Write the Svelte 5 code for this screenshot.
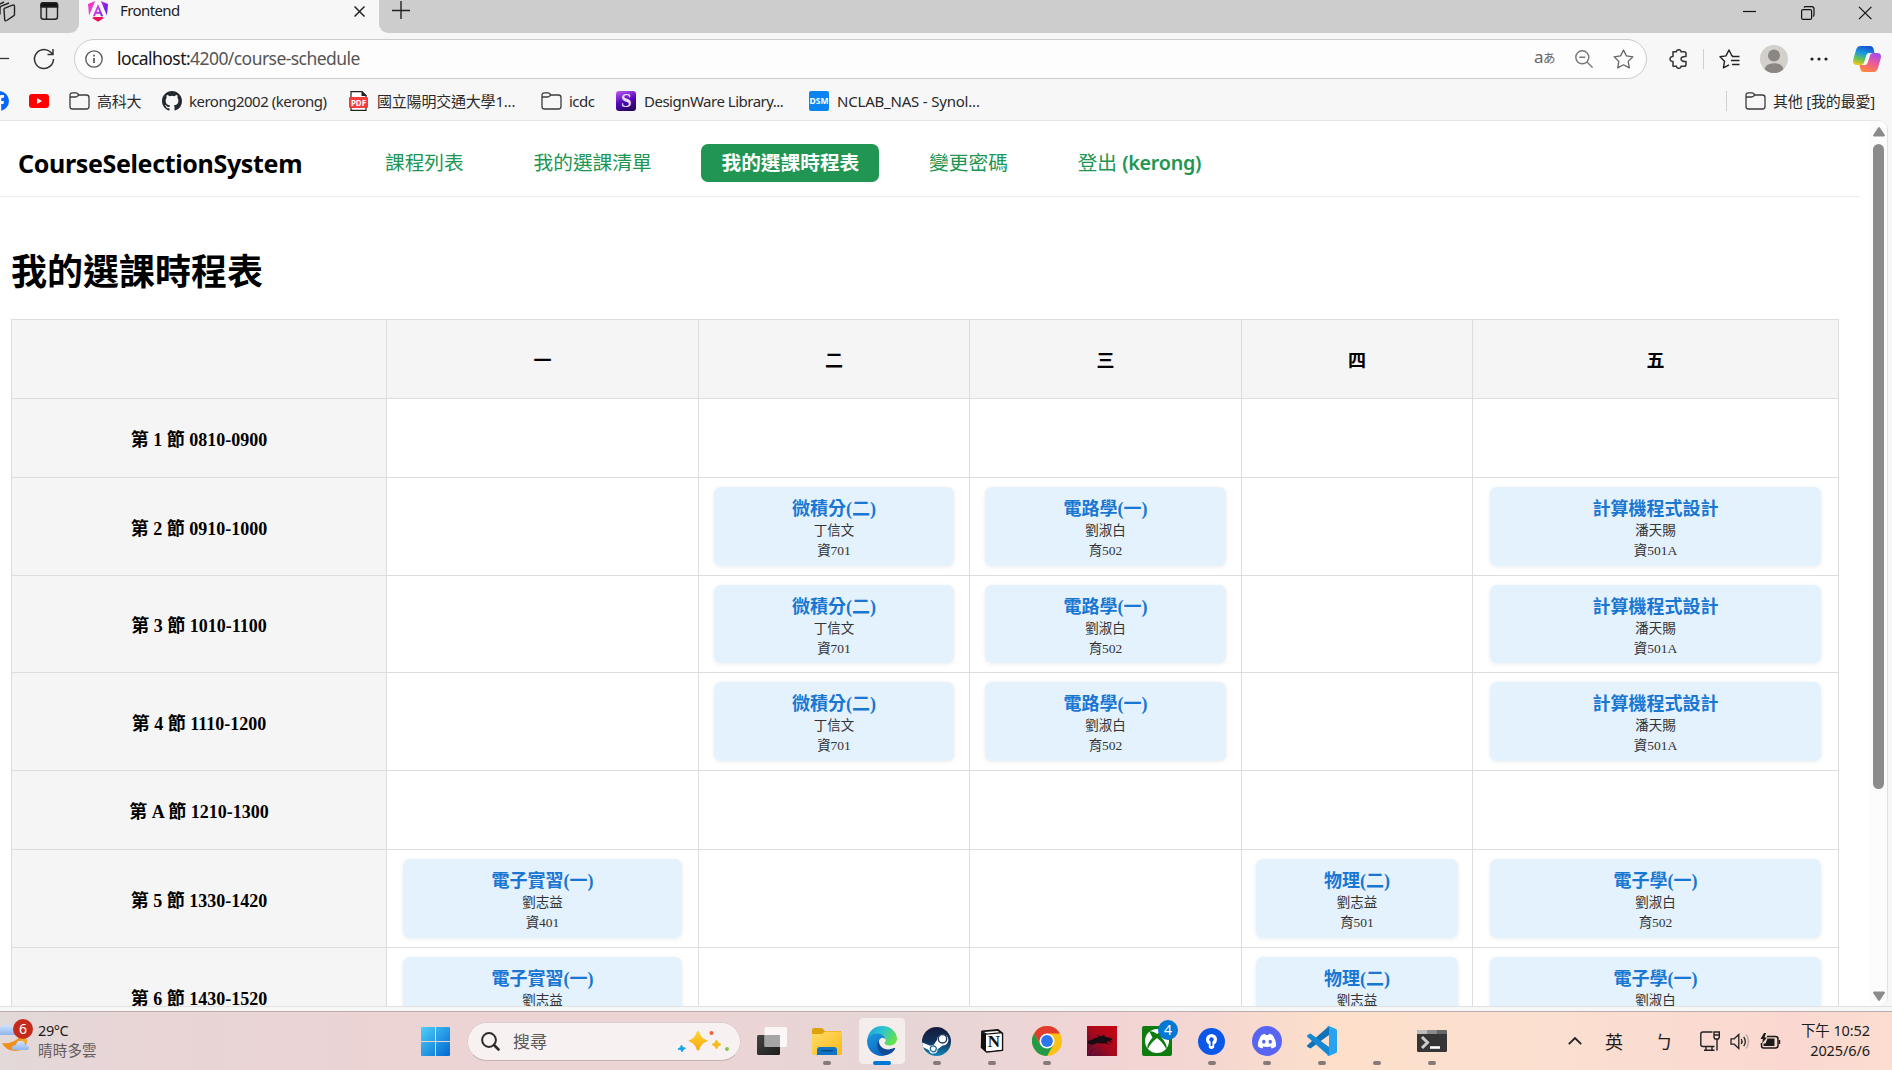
<script>
  const nav = [
    { label: '課程列表' },
    { label: '我的選課清單' },
    { label: '我的選課時程表', active: true },
    { label: '變更密碼' },
    { label: '登出', user: '(kerong)' }
  ];
  const days = ['一', '二', '三', '四', '五'];
  const calc = { name: '微積分(二)', teacher: '丁信文', room: '資701' };
  const circuit = { name: '電路學(一)', teacher: '劉淑白', room: '育502' };
  const prog = { name: '計算機程式設計', teacher: '潘天賜', room: '資501A' };
  const lab = { name: '電子實習(一)', teacher: '劉志益', room: '資401' };
  const physics = { name: '物理(二)', teacher: '劉志益', room: '育501' };
  const electronics = { name: '電子學(一)', teacher: '劉淑白', room: '育502' };
  const rows = [
    { label: '第 1 節 0810-0900', cells: [null, null, null, null, null] },
    { label: '第 2 節 0910-1000', cells: [null, calc, circuit, null, prog] },
    { label: '第 3 節 1010-1100', cells: [null, calc, circuit, null, prog] },
    { label: '第 4 節 1110-1200', cells: [null, calc, circuit, null, prog] },
    { label: '第 A 節 1210-1300', cells: [null, null, null, null, null] },
    { label: '第 5 節 1330-1420', cells: [lab, null, null, physics, electronics] },
    { label: '第 6 節 1430-1520', cells: [lab, null, null, physics, electronics] }
  ];
</script>

{#snippet folder()}
  <svg width="21" height="18" viewBox="0 0 21 18" fill="none" stroke="#3b3b3b" stroke-width="1.3">
    <path d="M1 4v10.5q0 2.5 2.5 2.5h14q2.500 0 2.500-2.500V5.500q0-2.500-2.500-2.500H10L8.200 1.200Q7.800.8 7 .8H3.500Q1 .8 1 3.300V5h5.800q.8 0 1.400-.6L9.800 3" />
  </svg>
{/snippet}

<div class="screen">
  <div class="tabs">
    <div class="tabs-left">
      <svg width="66" height="24" viewBox="0 0 66 24" fill="none" stroke="#222" stroke-width="1.4">
        <path d="M4 9.500q0-1 .9-1.400l7.600-3q2-.7 2 1.400v7.700q0 1.200-1 1.700l-6.800 4.600q-2 1.100-2-1zM0 14.500V8q0-1.300 1.200-1.800L9 3M-2 11V5l6-3" />
        <rect x="41" y="2.700" width="16.500" height="16.500" rx="2.500" />
        <path d="M41 7V5q0-2.300 2.300-2.300h12q2.300 0 2.300 2.300v2z" fill="#111" />
        <path d="M46.500 7v12" />
      </svg>
    </div>
    <div class="tab">
      <svg class="logo" width="20" height="21" viewBox="0 0 20 21">
        <defs>
          <linearGradient id="ng" x1="0" y1="0" x2="1" y2=".3">
            <stop offset="0" stop-color="#f637b5" /><stop offset=".45" stop-color="#e33be8" /><stop offset="1" stop-color="#6d1bf0" />
          </linearGradient>
        </defs>
        <path d="M7.200 0 0 3l1.100 11.500zM12.800 0 20 3l-1.100 11.500zM10 3.200l5.200 12H13l-1-2.400H8l-1 2.400H4.800zM10 7.500 8.600 11h2.800z" fill="url(#ng)" fill-rule="evenodd" />
        <path d="M5.400 16h9.200l1 1.300L10 20.700l-5.600-3.400z" fill="#f0115c" />
      </svg>
      <span class="tab-title">Frontend</span>
      <svg class="tab-x" width="11" height="11" viewBox="0 0 11 11" stroke="#222" stroke-width="1.500"><path d="M.5.5l10 10M10.500.5l-10 10" /></svg>
    </div>
    <div class="tabs-rest">
      <svg width="18" height="18" viewBox="0 0 18 18" stroke="#222" stroke-width="1.400"><path d="M9 0v18M0 9.500h18" /></svg>
      <div class="win">
        <svg width="130" height="14" viewBox="0 0 130 14" fill="none" stroke="#111" stroke-width="1.200">
          <path d="M0 5.500h13" />
          <rect x="58.600" y="3.600" width="10" height="9.800" rx="1.500" />
          <path d="M61 1.500q.4-.9 1.600-.9h6q2.400 0 2.400 2.400v5.500q0 1.400-1 2" />
          <path d="M116 .8l12.400 12.400M128.400.8 116 13.200" />
        </svg>
      </div>
    </div>
  </div>

  <div class="toolbar">
    <svg width="10" height="20" viewBox="0 0 10 20" stroke="#333" stroke-width="1.300"><path d="M0 9.500h9" /></svg>
    <svg width="22" height="22" viewBox="0 0 22 22" fill="none" stroke="#333" stroke-width="1.500"><path d="M20.500 11a9.500 9.500 0 1 1-3.300-7.200l2.300 2.200M20 1v5.500h-5.500" /></svg>
    <div class="address">
      <svg width="18" height="18" viewBox="0 0 18 18" fill="none" stroke="#555" stroke-width="1.300"><circle cx="9" cy="9" r="8.200" /><path d="M9 8v5M9 4.800v1.600" stroke-width="1.700" /></svg>
      <span class="url"><b>localhost:</b>4200/course-schedule</span>
      <span class="trans">a<small>あ</small></span>
      <svg width="18" height="18" viewBox="0 0 18 18" fill="none" stroke="#777" stroke-width="1.400"><circle cx="7.300" cy="7.300" r="6.500" /><path d="M12 12l5.600 5.600M4.300 7.300h6" /></svg>
      <svg width="21" height="20" viewBox="0 0 21 20" fill="none" stroke="#666" stroke-width="1.300" stroke-linejoin="round"><path d="M10.500 1l2.900 5.900 6.500.9-4.700 4.600 1.100 6.500-5.800-3.100-5.800 3.100 1.100-6.500L1.100 7.800l6.500-.9z" /></svg>
    </div>
    <svg class="puz" width="19" height="20" viewBox="0 0 19 20" fill="none" stroke="#333" stroke-width="1.500" stroke-linejoin="round"><path d="M4 2.800h3.500c-.3-2.800 4.800-2.800 4.500 0h3.200q1.800 0 1.800 1.800v3c-2.800-.3-5 .7-5 2.400s2.200 2.700 5 2.400v3q0 1.800-1.800 1.800H12c.3 2.800-4.800 2.800-4.500 0H4v-4.700c-4 .3-4-5.300 0-5z" /></svg>
    <i class="sep"></i>
    <svg width="21" height="20" viewBox="0 0 21 20" fill="none" stroke="#222" stroke-width="1.400" stroke-linejoin="round"><path d="M14 7h-1L10 1 7 6.900l-6 .9 4.500 4.500-1.100 6.500 5.600-3M13 7.500h7.500M12 11.500h8.500M13 15.500h7.500" /></svg>
    <svg width="28" height="28" viewBox="0 0 28 28"><circle cx="14" cy="14" r="14" fill="#d3d0cb" /><circle cx="14" cy="10.500" r="6" fill="#8a8683" /><path d="M4.500 24.300Q6 18.300 14 18.300t9.500 6A14 14 0 0 1 4.500 24.300" fill="#8a8683" /></svg>
    <svg class="dots" width="18" height="4" viewBox="0 0 18 4" fill="#222"><circle cx="2" cy="2" r="1.600" /><circle cx="9" cy="2" r="1.600" /><circle cx="16" cy="2" r="1.600" /></svg>
    <svg width="28" height="26" viewBox="0 0 28 26">
      <defs>
        <linearGradient id="cpa" x1=".6" y1="0" x2=".3" y2="1"><stop offset="0" stop-color="#1653d0" /><stop offset=".4" stop-color="#1a9de0" /><stop offset=".7" stop-color="#61c257" /><stop offset="1" stop-color="#f2c51b" /></linearGradient>
        <linearGradient id="cpb" x1=".7" y1="0" x2=".3" y2="1"><stop offset="0" stop-color="#a54af0" /><stop offset=".5" stop-color="#ee5b94" /><stop offset="1" stop-color="#fb8a3c" /></linearGradient>
      </defs>
      <path d="M7.500 0h10q2.200 0 3 2.500L21.500 7H16q-2 0-2.700 2.200l-2.500 8Q10 19 8 19H4q-5 0-3.700-5.500L3 4Q4.200 0 7.500 0" fill="url(#cpa)" />
      <path d="M20.500 26h-10q-2.200 0-3-2.500L6.500 19H12q2 0 2.700-2.200l2.500-8Q18 7 20 7h4q5 0 3.700 5.500L25 22q-1.200 4-4.500 4" fill="url(#cpb)" />
    </svg>
  </div>

  <div class="bookmarks">
    <span class="bm"><svg width="9" height="20" viewBox="11 0 9 20"><circle cx="10" cy="10" r="10" fill="#0866ff" /><path d="M9 20v-7h-3v-3h3V8q0-4 4-4h2v2.800h-1.500q-1.300 0-1.300 1.400V10H15l-.5 3h-2.300v7" fill="#fff" /></svg></span>
    <span class="bm"><svg width="20" height="14" viewBox="0 0 20 14"><rect width="20" height="14" rx="3" fill="#f00" /><path d="M8 4v6l5-3z" fill="#fff" /></svg></span>
    <span class="bm">{@render folder()}<span class="cj">高科大</span></span>
    <span class="bm gh"><svg width="20" height="20" viewBox="0 0 16 16" fill="#24292f"><path d="M8 0C3.580 0 0 3.580 0 8c0 3.540 2.290 6.530 5.470 7.590.4.070.550-.170.550-.380 0-.190-.010-.820-.010-1.490-2.010.370-2.530-.490-2.690-.940-.090-.230-.480-.940-.820-1.130-.280-.150-.680-.520-.010-.530.630-.010 1.080.580 1.230.820.720 1.210 1.870.870 2.330.660.070-.520.280-.870.510-1.070-1.780-.200-3.640-.890-3.640-3.950 0-.870.310-1.590.820-2.150-.080-.200-.360-1.020.080-2.120 0 0 .670-.210 2.200.820a7.500 7.500 0 0 1 4 0c1.530-1.040 2.200-.820 2.200-.820.440 1.100.160 1.920.080 2.120.510.560.820 1.270.820 2.150 0 3.070-1.870 3.750-3.650 3.950.290.250.540.730.540 1.480 0 1.070-.010 1.930-.010 2.200 0 .210.150.460.550.380A8 8 0 0 0 16 8c0-4.420-3.580-8-8-8" /></svg><span class="label">kerong2002 (kerong)</span></span>
    <span class="bm pdf"><span class="pdf-icon"><svg width="19" height="20" viewBox="0 0 19 20"><path d="M2 .6h11l4 4V19.400H2z" fill="#fff" stroke="#222" stroke-width="1.200" /><path d="M12.500 0v5H18z" fill="#222" /><rect y="6" width="19" height="11" rx="1" fill="#f53d3d" /></svg><em>PDF</em></span><span class="cj shift">國立陽明交通大學1...</span></span>
    <span class="bm icdc">{@render folder()}<span class="label">icdc</span></span>
    <span class="bm dw"><span class="s-icon">S</span><span class="label">DesignWare Library...</span></span>
    <span class="bm nas"><span class="dsm">DSM</span><span class="label">NCLAB_NAS - Synol...</span></span>
    <span class="bm other"><i class="sep"></i>{@render folder()}<span class="cj shift">其他 [我的最愛]</span></span>
  </div>

  <div class="viewport">
    <main>
      <header>
        <strong class="brand">CourseSelectionSystem</strong>
        <nav>
          {#each nav as item}
            <a class:active={item.active}>{item.label}{#if item.user}&nbsp;<b>{item.user}</b>{/if}</a>
          {/each}
        </nav>
      </header>
      <h1>我的選課時程表</h1>
      <div class="table">
        <div class="th"></div>
        {#each days as day}<div class="th">{day}</div>{/each}
        {#each rows as row}
          <div class="th">{row.label}</div>
          {#each row.cells as course}
            <div class="td">
              {#if course}
                <div class="course">
                  <b>{course.name}</b>
                  <span>{course.teacher}</span>
                  <span>{course.room}</span>
                </div>
              {/if}
            </div>
          {/each}
        {/each}
      </div>
    </main>
    <div class="scroll">
      <svg width="12" height="10" viewBox="0 0 12 10"><path d="M5 .8q1-1.400 2 0l4.700 7q.8 1.700-1 1.700H1.300q-1.800 0-1-1.700z" fill="#8b8b8b" /></svg>
      <div class="thumb"></div>
      <svg width="12" height="10" viewBox="0 0 12 10"><path d="M5 9.200q1 1.400 2 0l4.700-7Q12.500.5 10.700.5H1.300q-1.800 0-1 1.700z" fill="#8b8b8b" /></svg>
    </div>
  </div>
  <div class="win-edge"></div>

  <div class="taskbar">
    <div class="weather">
      <div class="w-icon">
        <svg width="30" height="34" viewBox="0 0 30 34">
          <defs><linearGradient id="cl" x1="0" y1="0" x2="0" y2="1"><stop offset="0" stop-color="#d4e5fb" /><stop offset="1" stop-color="#8fb6ee" /></linearGradient></defs>
          <path d="M2 21q5 1 10-1 7-3 10-8 5 4 5 8-2 9-12 9Q5 28 2 21" fill="#f18f1c" />
          <path d="M17 24q0-4 4-4 0-3-1-8 7 3 7 9z" fill="#f7a928" />
          <path d="M0 6q2-4 6-3 5-2 7 4 4 2 2 6H0z" fill="url(#cl)" />
          <path d="M15 28q-4 0-3-3 1-2 4-2 1-5 5-4 4 0 4 4 4 0 4 3 0 2-3 2z" fill="url(#cl)" />
        </svg>
        <span class="badge red">6</span>
      </div>
      <div class="w-text"><span>29°C</span><span class="desc">晴時多雲</span></div>
    </div>
    <div class="app">
      <svg width="29" height="29" viewBox="0 0 29 29"><defs><linearGradient id="wn" x1="0" y1="0" x2="1" y2="1"><stop offset="0" stop-color="#4fd0fb" /><stop offset="1" stop-color="#0067cf" /></linearGradient></defs><path d="M1 0h13v14H0V1q0-1 1-1M15 0h13q1 0 1 1v13H15zM0 15h14v14H1q-1 0-1-1zM15 15h14v13q0 1-1 1H15z" fill="url(#wn)" /></svg>
    </div>
    <div class="search">
      <svg width="19" height="19" viewBox="0 0 19 19" fill="none" stroke="#2c2c2c" stroke-width="2"><circle cx="8" cy="8" r="6.900" /><path d="M13 13l4.500 4.500" stroke-width="2.600" stroke-linecap="round" /></svg>
      <span>搜尋</span>
      <svg class="spark" width="52" height="22" viewBox="0 0 52 22">
        <defs><linearGradient id="sp" x1="0" y1="0" x2="0" y2="1"><stop offset="0" stop-color="#ffd633" /><stop offset="1" stop-color="#f5a70d" /></linearGradient></defs>
        <path d="M20 1q1 0 1.500 1.500 1.500 5.500 6.500 7.300 3 1 0 2.200-5 1.700-6.500 7.200Q20 22 18.500 19.200 17 13.700 12 12q-3-1.200 0-2.200 5-1.800 6.500-7.300Q19 1 20 1" fill="url(#sp)" />
        <path d="M38.500 10q.8 3.500 4.500 4.500-3.700 1-4.500 4.500-.8-3.500-4.500-4.500 3.700-1 4.500-4.500" fill="#f8b91a" stroke="#f8b91a" />
        <path d="M3.500 15l1 2.500 3 .7-2.500 1.500L4 22l-1-2.300-3-.7 2.500-1.500z" fill="#12a5ec" stroke="#12a5ec" />
        <circle cx="33.500" cy="3" r="2" fill="#ee6338" /><circle cx="49" cy="19" r="2" fill="#8bc34a" />
      </svg>
    </div>
    <div class="app first">
      <svg width="30" height="28" viewBox="0 0 30 28"><defs><linearGradient id="tv" x1="0" y1="0" x2="1" y2="1"><stop offset="0" stop-color="#444" /><stop offset="1" stop-color="#1c1c1c" /></linearGradient></defs><rect y="8" width="23" height="20" rx="1.500" fill="url(#tv)" /><rect x="7.500" width="22.500" height="20" rx="1.500" fill="#fff" opacity=".8" /><path d="M7.500 8H23v12H7.500z" fill="#999" opacity=".8" /></svg>
    </div>
    <div class="app run">
      <svg width="30" height="27" viewBox="0 0 30 27"><defs><linearGradient id="fo" x1="0" y1="0" x2="1" y2="1"><stop offset="0" stop-color="#ffdc6b" /><stop offset="1" stop-color="#f9b916" /></linearGradient></defs><path d="M0 2Q0 0 2 0h8l3 3h16v6H0z" fill="#dda10c" /><path d="M0 6h10l3-2.500h15q2 0 2 2V25q0 2-2 2H2q-2 0-2-2z" fill="url(#fo)" /><path d="M5 27v-5q0-3 3-3h14q3 0 3 3v5z" fill="#0f74c4" /><path d="M9 22.700h12" stroke="#064a86" stroke-width="1.400" /></svg>
    </div>
    <div class="app current">
      <svg width="30" height="30" viewBox="0 0 30 30">
        <defs>
          <linearGradient id="e1" x1="0" y1="0" x2="1" y2=".5"><stop offset="0" stop-color="#1a9fd9" /><stop offset=".5" stop-color="#2bc4d2" /><stop offset="1" stop-color="#65e04e" /></linearGradient>
          <linearGradient id="e2" x1="0" y1="0" x2=".6" y2="1"><stop offset="0" stop-color="#1b9be0" /><stop offset="1" stop-color="#0a63c0" /></linearGradient>
        </defs>
        <path d="M.3 12.500C2 4.500 8 0 15.200 0 24 0 30 6.500 30 12.500c0 4.500-3.500 7-7.500 7-3.200 0-5-1-5-2.200 0-.8 1.300-1.300 1.300-3.500 0-3-3-5.600-7-5.600-5 0-9.500 2-11.500 4.300" fill="url(#e1)" />
        <path d="M0 15C0 10.500 5 7.500 10 7.500c5 0 8.500 3 8.800 6.300-.9-1.700-3-2.600-4.800-1.600-5 3-3 15 8.500 14.300C20 29 17.500 30 15 30 6.500 30 0 23.500 0 15" fill="url(#e2)" />
        <path d="M11.800 14c-4 7 1 15.500 8.200 15 3.500-1 6.500-3.300 8-6 .5-1-.3-1.300-1-.9-8 3.500-15.500-.5-15.200-8.100" fill="#114a96" />
      </svg>
    </div>
    <div class="app run">
      <svg width="29" height="29" viewBox="0 0 29 29"><defs><linearGradient id="st" x1="0" y1="0" x2="0" y2="1"><stop offset="0" stop-color="#131b3c" /><stop offset=".5" stop-color="#133059" /><stop offset="1" stop-color="#1387b8" /></linearGradient></defs><circle cx="14.500" cy="14.500" r="14.500" fill="url(#st)" /><path d="M.2 15.500l8 3.300q1.500-1 3.300-.8l3.500-5a5.700 5.700 0 1 1 5.600 5.600l-5 3.600a4.300 4.300 0 0 1-8.500 1L.8 20z" fill="#fff" /><circle cx="20.500" cy="11.800" r="4.200" fill="#fff" stroke="#173962" stroke-width="1.400" /><circle cx="11.300" cy="21.800" r="3" fill="none" stroke="#156898" stroke-width="1.200" /></svg>
    </div>
    <div class="app run">
      <span class="notion"><svg width="24" height="24" viewBox="0 0 24 24"><path d="M2 2.200 18 .8l4.500 3.500v17L6.500 23 1.500 18.500z" fill="#fff" stroke="#111" stroke-width="1.500" stroke-linejoin="round" /><path d="M2 2.200l4 3.600 16.500-1.500L18 .8zM6 5.800V23l-4.500-4.500V2z" fill="#111" /><path d="M4 3l13.500-1 2 1.300L6.800 4.500zM7 6.800l14.500-1.300v15L7 22z" fill="#fff" /></svg><em>N</em></span>
    </div>
    <div class="app run">
      <svg width="30" height="30" viewBox="0 0 30 30"><circle cx="15" cy="15" r="15" fill="#fbc116" /><path d="M2 7.500A15 15 0 0 1 28 7.500H15L8.500 18.800z" fill="#e33b2e" /><path d="M2 7.500A15 15 0 0 0 15 30l6.500-11.300L15 22 8.500 18.700z" fill="#229a48" /><circle cx="15" cy="15" r="7.500" fill="#fff" /><circle cx="15" cy="15" r="5.900" fill="#2d75ea" /></svg>
    </div>
    <div class="app">
      <svg width="30" height="30" viewBox="0 0 30 30"><defs><linearGradient id="rd" x1="1" y1="0" x2="0" y2="1"><stop offset="0" stop-color="#c80412" /><stop offset=".5" stop-color="#a80a1c" /><stop offset="1" stop-color="#470c38" /></linearGradient></defs><path d="M0 0h30v30H0z" fill="url(#rd)" /><path d="M1 15q5-1 7-3l4-1-2-2 5 1.500 1-2 3 2.500 5 1 2 2.500-3-.5 2 3-4-2-1 1.500 4 2.500-5-1.500q-5 0-9-.500-4 2.500-9 .500z" fill="#180b12" /><path d="M1 29q0-8 9-9M5 29q1-4 6-5" stroke="#8e1230" fill="none" /></svg>
    </div>
    <div class="app">
      <svg width="30" height="30" viewBox="0 0 30 30"><rect width="30" height="30" rx="2" fill="#107c10" /><circle cx="15" cy="15" r="12" fill="#fff" /><path d="M7.500 5.500Q11 4.500 15 8q4-3.500 7.500-2.500L19.500 11.500Q26 19 24.500 23.500q-3-6.500-9.500-11.500-6.500 5-9.500 11.500Q4 19 10.500 11.500 8.500 8 7.500 5.500" fill="#107c10" /></svg>
      <span class="badge blue">4</span>
    </div>
    <div class="app run">
      <svg width="27" height="27" viewBox="0 0 27 27"><circle cx="13.500" cy="13.500" r="13.500" fill="#0b57e8" /><circle cx="13.500" cy="11.500" r="5.500" fill="#fff" /><path d="M10.800 13h5.400v6.500q-2.700 3-5.400 0z" fill="#fff" /><circle cx="13.500" cy="11.500" r="2.200" fill="#0b57e8" /><path d="M12.600 13h1.800v5h-1.800z" fill="#0b57e8" /></svg>
    </div>
    <div class="app run">
      <svg width="30" height="30" viewBox="0 0 30 30"><circle cx="15" cy="15" r="15" fill="#5865f2" /><path d="M9.500 9q2-1 3.500-1.200l.6 1.200q1.400-.2 2.800 0l.6-1.200Q18.500 8 20.500 9q4 5.500 3.500 11.500-2 1.500-4.300 2l-1-1.700 1.500-.8q-5.200 2-10.400 0l1.500.8-1 1.700Q8 22 6 20.500 5.500 14.500 9.500 9" fill="#fff" /><ellipse cx="11.800" cy="15.800" rx="1.700" ry="2" fill="#5865f2" /><ellipse cx="18.200" cy="15.800" rx="1.700" ry="2" fill="#5865f2" /></svg>
    </div>
    <div class="app run">
      <svg width="30" height="30" viewBox="0 0 30 30"><path d="M22 0v9L3.500 22.500.5 21q-1-1 0-2z" fill="#1272b8" /><path d="M22 30v-9L3.500 7.500.5 9q-1 1 0 2z" fill="#1687d2" /><path d="M22 0l7 3q1 .5 1 1.500v21q0 1-1 1.500l-7 3q-1.500 0-2.500-1 2 1 2.500-1V2q-.5-2-2.500-1 1-1 2.500-1" fill="#29a3ef" /></svg>
    </div>
    <div class="app run"></div>
    <div class="app run">
      <svg width="30" height="22" viewBox="0 0 30 22"><rect width="30" height="22" rx="1.500" fill="#353535" /><path d="M1.500 0H10v4H0V1.500Q0 0 1.500 0" fill="#bbb" /><path d="M10 0h10v4H10z" fill="#8b8b8b" /><path d="M20 0h8.500Q30 0 30 1.500V4H20z" fill="#666" /><path d="M5 7l5.500 5.500L5 18" stroke="#ccc" stroke-width="3" fill="none" /><path d="M13 17.500h10" stroke="#fff" stroke-width="2.600" /></svg>
    </div>
    <div class="tray">
      <svg width="14" height="8" viewBox="0 0 14 8" fill="none" stroke="#222" stroke-width="1.800"><path d="M.8 7.200 7 1l6.200 6.200" /></svg>
      <span class="ime">英</span>
      <span class="ime">ㄅ</span>
      <svg width="20" height="20" viewBox="0 0 20 20" fill="none" stroke="#222" stroke-width="1.400"><path d="M12.500 1H3Q.8 1 .8 3v10.500q0 2 2.200 2h11.500M6 15.500V19M12 15.500V19M4 19.200h10.500M17 8v11.500M14 1h5.300v5.500l-1 1.500h-3.300l-1-1.500zM14 4h5" /></svg>
      <svg width="20" height="17" viewBox="0 0 20 17" fill="none" stroke="#222" stroke-width="1.300"><path d="M1 5.800h3.200L8.800 1.500v14l-4.600-4.300H1zM11.300 6q1.600 2.500 0 5M13.700 3.800q3.200 4.700 0 9.400" /><path d="M16.200 1.500q4.600 7 0 14" stroke="#b9a29b" /></svg>
      <svg width="21" height="17" viewBox="0 0 21 17"><path d="M7 3.500h8.500q2.500 0 2.500 2.500v6.500q0 2.500-2.500 2.500h-12Q1.500 15 1.500 12.500V10" fill="none" stroke="#1a1a1a" stroke-width="1.500" /><path d="M7.500 5.500h7v7.500h-11V10.500h2zM18.800 7h1.400v4h-1.400zM4 0 .5 6H3L2 10.500 7 4.500H4.500L6 0z" fill="#1a1a1a" /></svg>
      <div class="clock"><span>下午 10:52</span><span>2025/6/6</span></div>
    </div>
  </div>
</div>

<style>
  :global(body) { margin: 0; overflow: hidden; }
  .screen { width: 1892px; height: 1070px; overflow: hidden; display: flex; flex-direction: column; background: #f7f7f7; font-family: "Noto Sans", "Noto Sans CJK TC", sans-serif; color: #1b1b1b; }
  svg { display: block; flex: none; }

  .tabs { height: 33px; flex: none; display: flex; background: linear-gradient(90deg, #cdcdcd 70px, #f7f7f7 70px 390px, #cdcdcd 390px); }
  .tabs-left { width: 79px; background: #cdcdcd; border-bottom-right-radius: 9px; }
  .tab { width: 300px; box-sizing: border-box; background: #f7f7f7; display: flex; align-items: flex-start; padding: 0 14px 0 9px; }
  .logo { margin-top: 1px; }
  .tab-title { font-size: 15px; line-height: 20px; margin-left: 12px; letter-spacing: -0.6px; }
  .tab-x { margin: 6px 0 0 auto; }
  .tabs-rest { flex: 1; background: #cdcdcd; border-bottom-left-radius: 9px; display: flex; padding: 1px 19px 0 13px; }
  .win { margin: 5px 0 0 auto; }

  .toolbar { height: 51px; flex: none; display: grid; grid-template-columns: 33px 41px 1573px 22px 34px 16px 41px 50px 43px 39px; align-items: center; }
  .address { height: 40px; box-sizing: border-box; border: 1px solid #cbcbcb; border-radius: 20px; background: #fdfdfd; display: grid; grid-template-columns: 32px 1417px 41px 38px 21px; align-items: center; padding-left: 10px; }
  .url { font-size: 17.500px; letter-spacing: -0.560px; line-height: 24px; color: #555; padding-bottom: 2px; }
  .url b { font-weight: 400; color: #161616; }
  .trans { font-size: 17px; line-height: 20px; color: #666; letter-spacing: -0.500px; white-space: nowrap; padding-bottom: 2px; }
  .trans small { font-size: 12.500px; }
  .puz { grid-column: 5; }
  .sep { width: 1px; height: 20px; background: #cfcfcf; flex: none; }

  .bookmarks { height: 36px; flex: none; display: grid; grid-template-columns: 29px 40px 93px 187px 192px 75px 193px 917px 166px; align-items: center; font-size: 15px; line-height: 20px; color: #2a2a2a; box-sizing: border-box; padding-bottom: 2px; }
  .bm { display: flex; align-items: center; gap: 7px; white-space: nowrap; letter-spacing: -0.500px; }
  .label { padding-bottom: 1px; }
  .cj { letter-spacing: -0.200px; padding-bottom: 1px; }
  .dw, .nas { gap: 8px; }
  .nas { letter-spacing: -0.200px; }
  .pdf-icon { position: relative; margin-right: 2px; }
  .pdf-icon em { position: absolute; left: 0; top: 6px; width: 19px; text-align: center; font: 700 8px/11px "Noto Sans", sans-serif; letter-spacing: 0; color: #fff; }
  .s-icon { width: 20px; height: 20px; border-radius: 3px; background: linear-gradient(160deg, #c15cf5, #5206b8 50%, #1b0647); color: #e9dcf7; font: 700 19px/20px "Liberation Serif", serif; text-align: center; }
  .dsm { width: 20px; height: 20px; border-radius: 2px; background: #0a84f0; color: #fff; font: 700 8.500px/20px "Noto Sans", sans-serif; text-align: center; letter-spacing: 0; }
  .other .sep { margin-right: 11px; }

  .viewport { height: 886px; width: 1888px; box-sizing: border-box; flex: none; display: flex; background: #fff; border-top: 1px solid #e6e6e6; border-right: 1px solid #e2e2e2; border-radius: 0 9px 9px 0; overflow: hidden; }
  main { width: 1870px; height: 885px; overflow: hidden; }
  header { height: 76px; width: 1860px; box-sizing: border-box; border-bottom: 1px solid #ececec; display: flex; align-items: center; padding: 9px 0 0 18px; }
  .brand { width: 347px; font-size: 25px; letter-spacing: -0.350px; color: #000; line-height: 36px; }
  nav { display: flex; gap: 29.800px; }
  nav a { height: 38px; line-height: 38px; padding: 0 20px; border-radius: 7px; font-size: 19.700px; color: #219653; font-weight: 400; white-space: nowrap; }
  nav a b { font-weight: 600; letter-spacing: -0.250px; }
  nav a.active { background: #219653; color: #fff; font-weight: 700; }
  h1 { font: 700 36px/50px "Noto Sans CJK TC", sans-serif; margin: 47px 0 25px 11px; color: #000; }

  .table { margin-left: 11px; width: 1828px; box-sizing: border-box; display: grid; grid-template-columns: 375px 312px 271px 272px 231px 366px; grid-template-rows: 79px 79px 98px 97px 98px 79px 98px 98px; border-left: 1px solid #ddd; border-top: 1px solid #ddd; font-family: "Liberation Serif", "Noto Sans CJK TC", serif; }
  .th, .td { box-sizing: border-box; border-right: 1px solid #ddd; border-bottom: 1px solid #ddd; }
  .th { background: #f5f5f5; font-weight: 700; font-size: 18px; color: #000; display: flex; align-items: center; justify-content: center; }
  .td { padding: 9px calc(2.5% + 8px); }
  .course { height: 100%; box-sizing: border-box; background: #e3f2fd; border-radius: 7px; box-shadow: 0 1px 4px rgba(0, 0, 0, 0.080); text-align: center; display: flex; flex-direction: column; padding-top: 10px; }
  .course b { font-size: 18px; line-height: 24px; color: #1976d2; }
  .course span { font-size: 13.500px; line-height: 20px; color: #333; }

  .scroll { width: 18px; background: #fcfcfc; display: flex; flex-direction: column; align-items: center; padding: 6px 0 5px 1px; box-sizing: border-box; }
  .thumb { width: 11px; height: 645px; border-radius: 6px; background: #8b8b8b; margin: 7px 0 auto; }
  .win-edge { height: 6px; flex: none; box-sizing: border-box; border-top: 1px solid #e1e1e1; border-bottom: 1px solid #b9adad; }

  .taskbar { flex: 1; display: flex; align-items: center; background: linear-gradient(90deg, #e2d9d9 0, #e8d5d6 120px, #ecd3d4 400px, #ecd4d4 700px, #e6d5d6 900px, #f0d5d5 1080px, #f4d6d2 1200px, #fddfca 1330px, #fbdfd0 1560px, #fad8d1 1790px, #fcddd0 1892px); }
  .weather { width: 408px; height: 58px; display: flex; }
  .w-icon { position: relative; width: 38px; padding-top: 10px; box-sizing: border-box; }
  .badge { position: absolute; width: 20px; height: 20px; border-radius: 50%; color: #fff; font-size: 14px; line-height: 20px; text-align: center; }
  .red { left: 13px; top: 7px; background: #c42b1c; }
  .blue { left: 29px; top: 3px; background: #0078d4; }
  .w-text { display: flex; flex-direction: column; font-size: 14.500px; line-height: 20px; padding-top: 8px; letter-spacing: -0.400px; }
  .desc { color: #635a5b; letter-spacing: 0.200px; }
  .app { position: relative; width: 55px; height: 48px; flex: none; display: flex; align-items: center; justify-content: center; }
  .first { margin-left: 3px; }
  .run::after { content: ""; position: absolute; left: 23.500px; bottom: 0; width: 8px; height: 4px; border-radius: 2px; background: #857a78; }
  .current { width: 48px; margin: 0 3.500px; box-sizing: border-box; background: #f5ecec; border: 1px solid #e4d7d8; border-radius: 5px; }
  .current::after { content: ""; position: absolute; left: 14px; bottom: -1px; width: 18px; height: 4px; border-radius: 2px; background: #0078d4; }
  .search { width: 274px; height: 39px; margin-left: 4px; box-sizing: border-box; border: 1px solid #dfcdcd; border-bottom-color: #c4b2b3; border-radius: 20px; background: #f8f1f1; display: flex; align-items: center; padding: 0 10px 0 13px; font-size: 17px; color: #5b5757; }
  .search span { margin-left: 13px; padding-bottom: 2px; }
  .spark { margin-left: auto; }
  .notion { position: relative; }
  .notion em { position: absolute; left: 8px; top: 4px; width: 13px; font: 700 17px/18px "Liberation Serif", serif; color: #111; text-align: center; }
  .tray { flex: 1; display: grid; grid-template-columns: 37px 50px 45px 30px 30px 21px 89px; align-items: center; justify-content: end; padding-right: 22px; font-size: 18px; }
  .ime { padding-bottom: 1px; }
  .clock { display: flex; flex-direction: column; text-align: right; font-size: 14.500px; line-height: 20px; letter-spacing: -0.100px; white-space: nowrap; padding-bottom: 3px; }
</style>
